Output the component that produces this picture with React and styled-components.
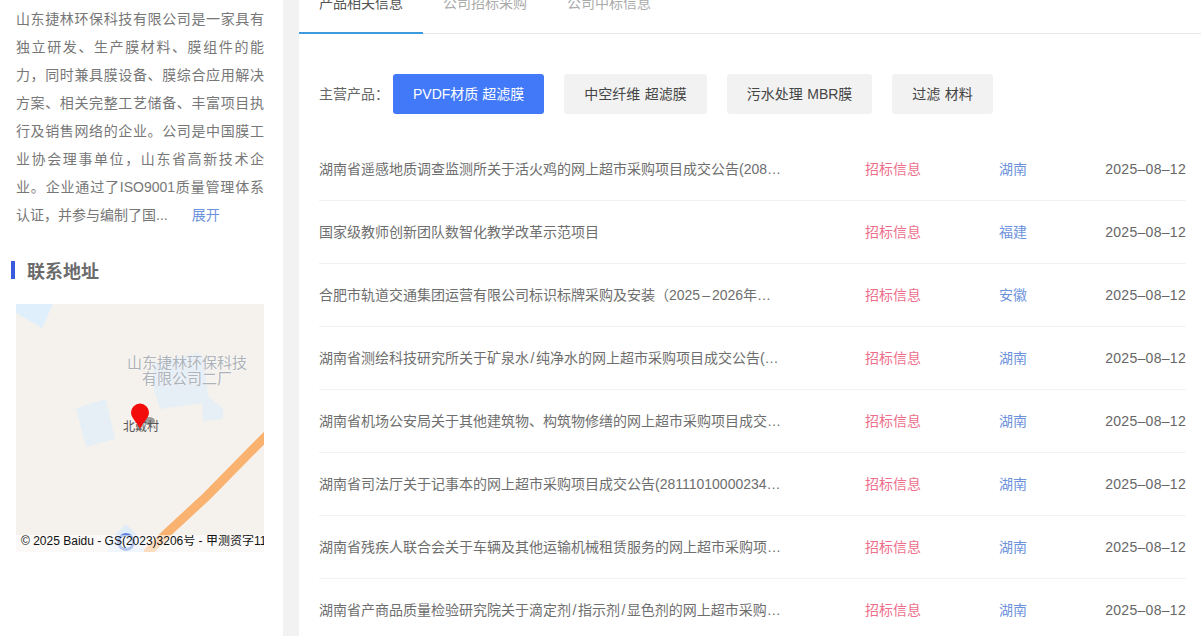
import React from "react";
import styled, { createGlobalStyle } from "styled-components";

const Global = createGlobalStyle`
  html, body { margin: 0; padding: 0; background: #fff; height: 636px; overflow: hidden; }
  * { box-sizing: border-box; }
`;
const FONT = `"Liberation Sans", "Noto Sans CJK SC", sans-serif`;

const Page = styled.div`
  display: flex; height: 636px; overflow: hidden;
  font-family: ${FONT}; font-size: 14px; color: #666;
`;
const Sidebar = styled.aside`
  width: 283px; flex: none; background: #fff; padding: 5px 19px 0 16px;
`;
const Intro = styled.p`
  margin: 0; font-size: 14px; line-height: 28px; color: #777; text-align: justify;
`;
const More = styled.span`color: #6d92dc; margin-left: 24px;`;
const SectionTitle = styled.h3`
  margin: 32px 0 0 -5px; padding-left: 12px; border-left: 4px solid #3a5bdc;
  height: 18px; line-height: 23px; font-size: 18px; font-weight: 700; color: #6b6b6b; white-space: nowrap;
`;
const MapBox = styled.div`
  position: relative; width: 248px; height: 248px; margin-top: 25px; overflow: hidden; background: #f5f2ee;
`;
const MapArt = styled.svg`display: block;`;
const MapLabel = styled.div`
  position: absolute; left: 101px; top: 51px; width: 140px; text-align: center;
  font-size: 15px; line-height: 16px; color: #aeb3b9;
  text-shadow: 0 0 2px #fff;
`;
const VillageLabel = styled.div`
  position: absolute; left: 107px; top: 116px; font-size: 12px; line-height: 14px; color: #555;
`;
const Pin = styled.svg`position: absolute; left: 114px; top: 99px;`;
const Copyright = styled.div`
  position: absolute; left: 0; right: 0; bottom: 0; padding: 0 5px 4px; white-space: nowrap; overflow: hidden;
  font-size: 12px; line-height: 13px; color: #111; background: rgba(255, 255, 255, 0.55);
`;
const Gutter = styled.div`width: 16px; flex: none; background: #f2f2f2;`;
const Main = styled.main`flex: 1; min-width: 0; background: #fff;`;
const Tabs = styled.nav`
  display: flex; margin-top: -6px; height: 40px; border-bottom: 1px solid #e4e6e8;
`;
const Tab = styled.div`
  width: 124px; height: 40px; padding-left: 20px; line-height: 18px;
  color: ${p => (p.$active ? "#555" : "#aaa")};
  border-bottom: ${p => (p.$active ? "2px solid #3d9ade" : "none")};
`;
const TagRow = styled.div`
  display: flex; align-items: center; gap: 20px; padding: 40px 0 0 20px;
`;
const TagLabel = styled.span`width: 54px; padding-bottom: 2px; color: #666; white-space: nowrap;`;
const Tag = styled.div`
  height: 40px; line-height: 40px; padding: 0 20px; border-radius: 3px; white-space: pre;
  word-spacing: ${p => (p.$active ? "0" : "0.6px")};
  background: ${p => (p.$active ? "#4279f8" : "#f2f2f2")};
  color: ${p => (p.$active ? "#fff" : "#444")};
`;
const List = styled.div`margin: 24px 15px 0 20px;`;
const Row = styled.div`
  display: flex; align-items: center; height: 63px; line-height: 20px;
  border-bottom: 1px solid #f2f2f2;
`;
const Title = styled.div`
  width: 546px; flex: none; color: #6e6e6e; white-space: nowrap; overflow: hidden;
`;
const WideGlyph = styled.span`margin: 0 ${p => p.$gap}px;`;
const Kind = styled.div`width: 134px; flex: none; color: #ee6f8c;`;
const Region = styled.div`flex: 1; color: #6d92dc;`;
const DateCell = styled.div`color: #666; letter-spacing: 0.3px;`;

const tags = ["PVDF材质 超滤膜", "中空纤维 超滤膜", "污水处理 MBR膜", "过滤 材料"];
const rows = [
  ["湖南省遥感地质调查监测所关于活火鸡的网上超市采购项目成交公告(208…", "湖南"],
  ["国家级教师创新团队数智化教学改革示范项目", "福建"],
  ["合肥市轨道交通集团运营有限公司标识标牌采购及安装（2025–2026年…", "安徽"],
  ["湖南省测绘科技研究所关于矿泉水/纯净水的网上超市采购项目成交公告(…", "湖南"],
  ["湖南省机场公安局关于其他建筑物、构筑物修缮的网上超市采购项目成交…", "湖南"],
  ["湖南省司法厅关于记事本的网上超市采购项目成交公告(28111010000234…", "湖南"],
  ["湖南省残疾人联合会关于车辆及其他运输机械租赁服务的网上超市采购项…", "湖南"],
  ["湖南省产商品质量检验研究院关于滴定剂/指示剂/显色剂的网上超市采购…", "湖南"],
];

const renderTitle = (text) =>
  text.split(/([/–])/).map((part, i) =>
    part === "/" ? <WideGlyph key={i} $gap={1.5}>/</WideGlyph>
    : part === "–" ? <WideGlyph key={i} $gap={2}>–</WideGlyph>
    : part
  );

export default function App() {
  return (
    <Page>
      <Global />
      <Sidebar>
        <Intro>
          山东捷林环保科技有限公司是一家具有独立研发、生产膜材料、膜组件的能力，同时兼具膜设备、膜综合应用解决方案、相关完整工艺储备、丰富项目执行及销售网络的企业。公司是中国膜工业协会理事单位，山东省高新技术企业。企业通过了ISO9001质量管理体系认证，并参与编制了国...
          <More>展开</More>
        </Intro>
        <SectionTitle>联系地址</SectionTitle>
        <MapBox>
          <MapArt width="248" height="248" viewBox="0 0 248 248">
            <rect width="248" height="248" fill="#f5f2ee" />
            <polygon points="0,0 37,0 26,24 0,9" fill="#e0effc" />
            <polygon points="60,104 90,95 99,135 70,143" fill="#e6eef6" />
            <polygon points="137,59 181,49 187,52 192,92 207,105 207,115 187,117 186,99 144,105 137,82" fill="#e6eef6" />
            <path d="M252 130 L191 192 L151 229 L130 250" stroke="#f9b26f" strokeWidth="9" fill="none" />
            <polygon points="110,220 128,238 128,248 92,248 92,238" fill="#e0ebf8" />
            <circle cx="110" cy="238" r="9" fill="#5a7fdc" />
            <circle cx="110" cy="238" r="6" fill="#e9eefb" />
            <ellipse cx="133" cy="117" rx="6" ry="4" fill="#9a9a9a" />
          </MapArt>
          <MapLabel>山东捷林环保科技<br />有限公司二厂</MapLabel>
          <VillageLabel>北戴村</VillageLabel>
          <Pin width="20" height="26" viewBox="0 0 20 26">
            <path d="M10 26 C7 19 1 15 1 9.5 A9 9 0 0 1 19 9.5 C19 15 13 19 10 26Z" fill="#f20c0c" />
          </Pin>
          <Copyright>© 2025 Baidu - GS(2023)3206号 - 甲测资字1100930</Copyright>
        </MapBox>
      </Sidebar>
      <Gutter />
      <Main>
        <Tabs>
          <Tab $active>产品相关信息</Tab>
          <Tab>公司招标采购</Tab>
          <Tab>公司中标信息</Tab>
        </Tabs>
        <TagRow>
          <TagLabel>主营产品：</TagLabel>
          {tags.map((t, i) => <Tag key={t} $active={i === 0}>{t}</Tag>)}
        </TagRow>
        <List>
          {rows.map(([t, r], i) => (
            <Row key={i}>
              <Title>{renderTitle(t)}</Title>
              <Kind>招标信息</Kind>
              <Region>{r}</Region>
              <DateCell>2025–08–12</DateCell>
            </Row>
          ))}
        </List>
      </Main>
    </Page>
  );
}
